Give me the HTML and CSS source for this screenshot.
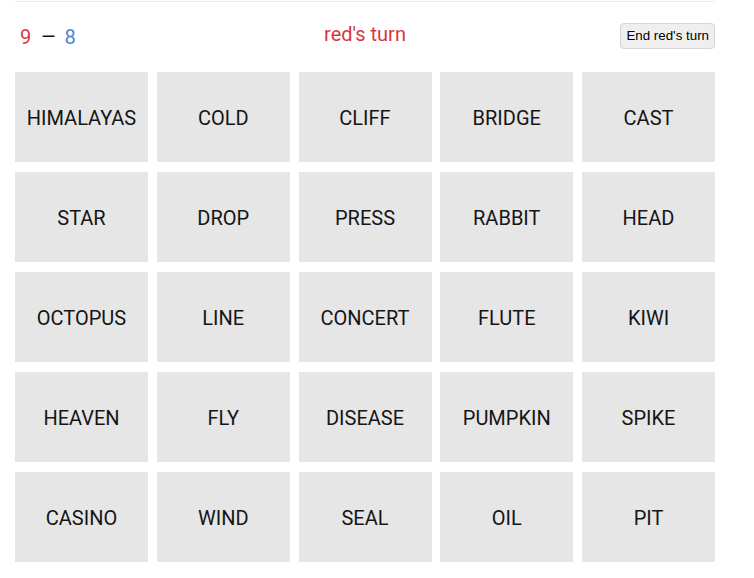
FILE: index.html
```html
<!DOCTYPE html>
<html>
<head>
<meta charset="utf-8">
<link rel="stylesheet" href="styles.css">
</head>
<body>
<div class="game">
  <div class="header">
    <div class="score"><span class="red">9</span><span class="dash">–</span><span class="blue">8</span></div>
    <div class="turn">red's turn</div>
    <div class="actions"><button class="end-btn">End red's turn</button></div>
  </div>
  <div class="board">
    <div class="card">HIMALAYAS</div>
    <div class="card">COLD</div>
    <div class="card">CLIFF</div>
    <div class="card">BRIDGE</div>
    <div class="card">CAST</div>
    <div class="card">STAR</div>
    <div class="card">DROP</div>
    <div class="card">PRESS</div>
    <div class="card">RABBIT</div>
    <div class="card">HEAD</div>
    <div class="card">OCTOPUS</div>
    <div class="card">LINE</div>
    <div class="card">CONCERT</div>
    <div class="card">FLUTE</div>
    <div class="card">KIWI</div>
    <div class="card">HEAVEN</div>
    <div class="card">FLY</div>
    <div class="card">DISEASE</div>
    <div class="card">PUMPKIN</div>
    <div class="card">SPIKE</div>
    <div class="card">CASINO</div>
    <div class="card">WIND</div>
    <div class="card">SEAL</div>
    <div class="card">OIL</div>
    <div class="card">PIT</div>
  </div>
</div>
</body>
</html>
```
FILE: styles.css
```css
html, body {
  margin: 0;
  padding: 0;
  background: #fff;
}
body {
  font-family: Roboto, "Liberation Sans", sans-serif;
}
.game {
  width: 700px;
  margin: 1px 0 0 15px;
  border-top: 1px solid #ebebeb;
}
.header {
  display: grid;
  grid-template-columns: 1fr auto 1fr;
  align-items: center;
  height: 70px;
}
.score {
  font-size: 20px;
  padding-left: 5px;
  margin-top: 0;
}
.red { color: #d9363e; }
.blue { color: #4a86d8; }
.dash {
  color: #111;
  margin: 0 9px 0 11px;
  display: inline-block;
  transform: scaleX(1.2);
}
.turn {
  color: #d9363e;
  font-size: 20px;
  margin-top: -7px;
}
.actions {
  display: flex;
  justify-content: flex-end;
}
.end-btn {
  font-family: "Liberation Sans", Arial, sans-serif;
  font-size: 13.33px;
  color: #000;
  background: #efefef;
  border: 1px solid #d6d6d6;
  border-radius: 4px;
  padding: 0 5px;
  height: 26px;
  margin-top: -3px;
}
.board {
  display: grid;
  grid-template-columns: repeat(5, 1fr);
  grid-auto-rows: 90px;
  column-gap: 8.75px;
  row-gap: 10px;
}
.card {
  background: #e6e6e6;
  display: flex;
  align-items: center;
  justify-content: center;
  padding-top: 1px;
  font-size: 20px;
  color: #151515;
}
```
